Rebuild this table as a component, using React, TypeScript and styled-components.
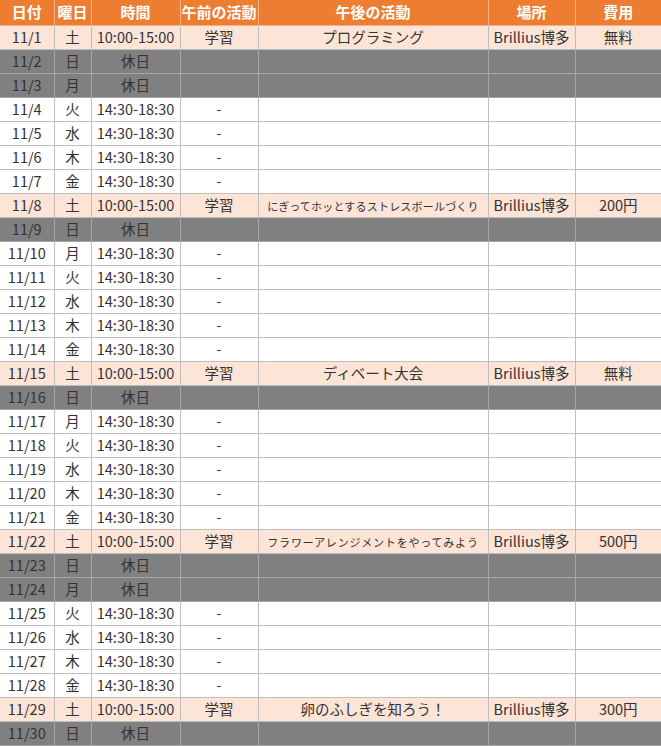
import React from "react";
import styled, { createGlobalStyle } from "styled-components";

const Global = createGlobalStyle`
  html, body { margin: 0; padding: 0; background: #ffffff; }
  body { font-family: "Noto Sans CJK JP", "Noto Sans", sans-serif; }
`;

type Kind = "sat" | "off" | "day";

interface Row {
  date: string;
  dow: string;
  kind: Kind;
  time: string;
  am: string;
  pm: string;
  pmSmall?: number;
  place: string;
  fee: string;
}

const DOWS = ["日", "月", "火", "水", "木", "金", "土"];
const HOLIDAYS = [3, 24];
const SAT: Record<number, { pm: string; fee: string; small?: number }> = {
  1: { pm: "プログラミング", fee: "無料" },
  8: { pm: "にぎってホッとするストレスボールづくり", fee: "200円", small: 0.2 },
  15: { pm: "ディベート大会", fee: "無料" },
  22: { pm: "フラワーアレンジメントをやってみよう", fee: "500円", small: 0.8 },
  29: { pm: "卵のふしぎを知ろう！", fee: "300円" },
};

const rows: Row[] = Array.from({ length: 30 }, (_, i) => {
  const d = i + 1;
  const w = (6 + i) % 7; // 11/1 is Saturday
  const dow = DOWS[w];
  const date = `11/${d}`;
  if (w === 0 || HOLIDAYS.includes(d)) {
    return { date, dow, kind: "off", time: "休日", am: "", pm: "", place: "", fee: "" };
  }
  if (w === 6) {
    const s = SAT[d];
    return {
      date,
      dow,
      kind: "sat",
      time: "10:00-15:00",
      am: "学習",
      pm: s.pm,
      pmSmall: s.small,
      place: "Brillius博多",
      fee: s.fee,
    };
  }
  return { date, dow, kind: "day", time: "14:30-18:30", am: "-", pm: "", place: "", fee: "" };
});

const WIDTHS = [54, 37, 89, 78, 230, 87, 86];
const HEADERS = ["日付", "曜日", "時間", "午前の活動", "午後の活動", "場所", "費用"];

const Table = styled.table`
  width: 661px;
  table-layout: fixed;
  border-collapse: collapse;
  color: #333333;
`;

const HeadRow = styled.tr`
  height: 25px;
  background: #ed7d31;
`;

const HeadCell = styled.th`
  padding: 0;
  height: 24px;
  font-size: 15px;
  font-weight: 700;
  color: #ffffff;
  text-align: center;
  white-space: nowrap;
  line-height: 18px;
  overflow: hidden;
  border-left: 1px solid #f4b183;
  border-bottom: 1px solid #f4b183;
  &:first-child { border-left: none; }
`;

const BG: Record<Kind, string> = {
  sat: "#fce4d6",
  off: "#808080",
  day: "#ffffff",
};

const BodyRow = styled.tr<{ $kind: Kind }>`
  height: 24px;
  background: ${(p) => BG[p.$kind]};
`;

const Cell = styled.td<{ $kind: Kind }>`
  padding: 0;
  height: 23px;
  font-size: 14.5px;
  text-align: center;
  white-space: nowrap;
  overflow: hidden;
  line-height: 18px;
  border: 1px solid ${(p) => (p.$kind === "off" ? "#a6a6a6" : "#bfbfbf")};
  &:first-child { border-left: none; }
  &:last-child { border-right: none; }
`;

const SmallText = styled.span<{ $spacing: number }>`
  font-size: 11px;
  letter-spacing: ${(p) => p.$spacing}px;
`;

export default function App() {
  return (
    <>
      <Global />
      <Table>
        <colgroup>
          {WIDTHS.map((w, i) => (
            <col key={i} style={{ width: w }} />
          ))}
        </colgroup>
        <thead>
          <HeadRow>
            {HEADERS.map((h) => (
              <HeadCell key={h}>{h}</HeadCell>
            ))}
          </HeadRow>
        </thead>
        <tbody>
          {rows.map((r) => (
            <BodyRow key={r.date} $kind={r.kind}>
              <Cell $kind={r.kind}>{r.date}</Cell>
              <Cell $kind={r.kind}>{r.dow}</Cell>
              <Cell $kind={r.kind}>{r.time}</Cell>
              <Cell $kind={r.kind}>{r.am}</Cell>
              <Cell $kind={r.kind}>
                {r.pmSmall !== undefined ? (
                  <SmallText $spacing={r.pmSmall}>{r.pm}</SmallText>
                ) : (
                  r.pm
                )}
              </Cell>
              <Cell $kind={r.kind}>{r.place}</Cell>
              <Cell $kind={r.kind}>{r.fee}</Cell>
            </BodyRow>
          ))}
        </tbody>
      </Table>
    </>
  );
}
